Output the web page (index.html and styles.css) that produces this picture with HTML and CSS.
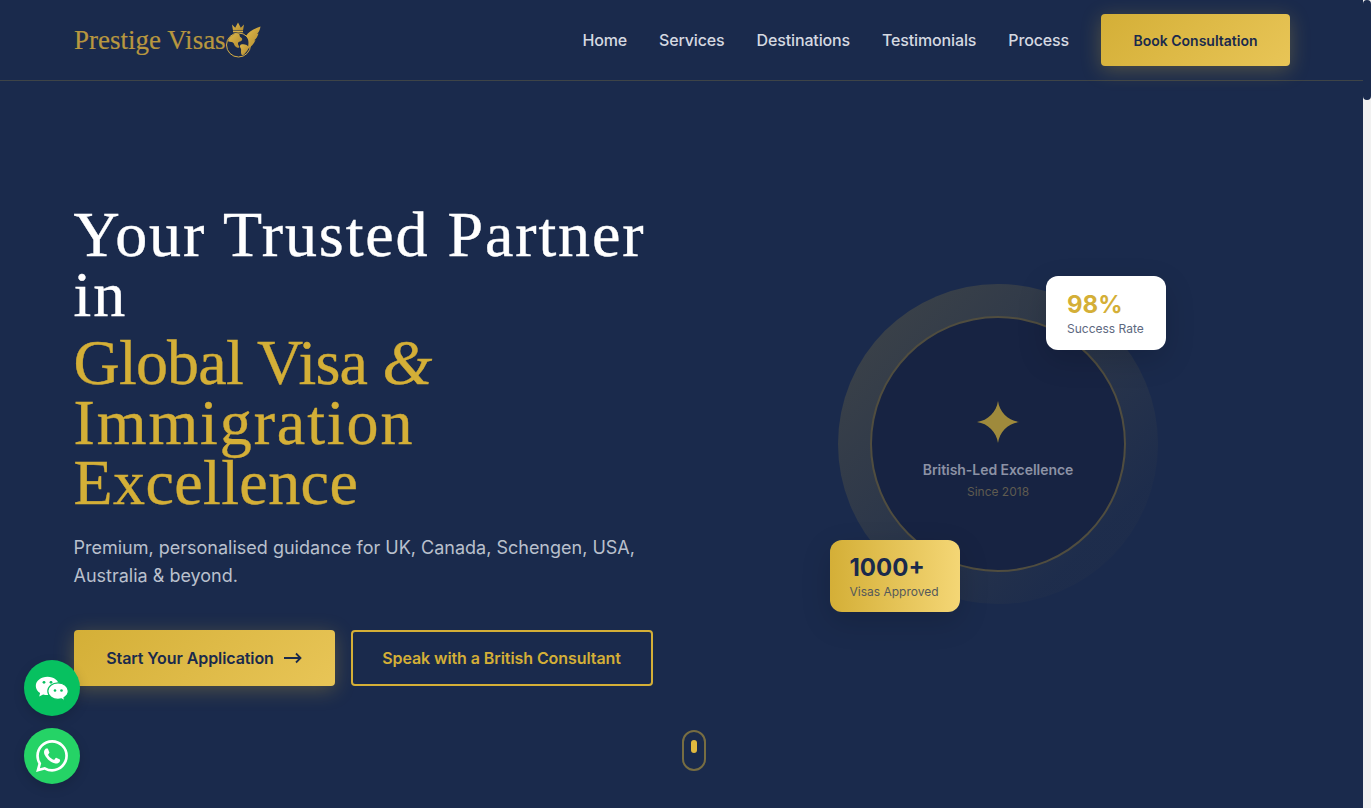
FILE: index.html
```html
<!DOCTYPE html>
<html lang="en">
<head>
    <meta charset="UTF-8">
    <meta name="viewport" content="width=device-width, initial-scale=1.0">
    <title>Prestige Visas</title>
    <link rel="stylesheet" href="styles.css">
</head>
<body>

<div class="page">
    <header class="site-header">
        <a class="logo" href="#">
            <span>Prestige Visas</span>
            <svg class="logo-mark" viewBox="0 0 44 44" aria-hidden="true">
                <defs>
                    <linearGradient id="logo-gold" x1="0" y1="0" x2="1" y2="1">
                        <stop offset="0" stop-color="#e0b94a"/>
                        <stop offset="1" stop-color="#b08a30"/>
                    </linearGradient>
                </defs>
                <path fill="url(#logo-gold)" d="M11 6.500l3.200 3.200L17 4.500l2.800 5.200L23 6.500l-1 6H12z"/>
                <rect x="12" y="13" width="10" height="1.300" fill="#d6ae45"/>
                <circle cx="17.500" cy="27" r="12" fill="none" stroke="#d6ae45" stroke-width="1"/>
                <path fill="url(#logo-gold)" d="M7 23c1.500-4.500 6-8 10.500-7.500 2 1.500.5 3 2.500 4s1.500 3.500-1 4-2.500 2.500-1 4.500-1.500 2.500-3.500.5-1-4-4-4.500-3.500-.5-3.500-1z"/>
                <path fill="url(#logo-gold)" d="M20 26.500c3-1 7 .5 7.500 2.500s-2.500 5.500-4.500 7.500-3-.5-3-2.500.5-2.500-.5-4-.5-3 .5-3.500z"/>
                <path fill="url(#logo-gold)" d="M25 18C28 13 33 11 39.500 8.500 39 12 38 14 36 16l1.500-.5C36.500 19 35 21 33 22.500l1.500-.5C33 26 30 29 26.500 31 28 26 28 21 25 18z"/>
            </svg>
        </a>
        <nav class="main-nav">
            <a href="#">Home</a>
            <a href="#">Services</a>
            <a href="#">Destinations</a>
            <a href="#">Testimonials</a>
            <a href="#">Process</a>
            <a class="btn btn-gold btn-small" href="#">Book Consultation</a>
        </nav>
    </header>

    <section class="hero">
        <div class="hero-text">
            <h1>
                <span class="line-white">Your Trusted Partner in</span>
                <span class="line-gold line-global">Global Visa <i>&amp;</i></span>
                <span class="line-gold line-immigration">Immigration</span>
                <span class="line-gold line-excellence">Excellence</span>
            </h1>
            <p>Premium, personalised guidance for UK, Canada, Schengen, USA, Australia &amp; beyond.</p>
            <div class="hero-actions">
                <a class="btn btn-gold" href="#">
                    Start Your Application
                    <svg class="arrow" viewBox="0 0 18 12" aria-hidden="true"><path d="M0 6h16.500M12 1.500L16.500 6 12 10.500"/></svg>
                </a>
                <a class="btn btn-outline" href="#">Speak with a British Consultant</a>
            </div>
        </div>

        <div class="hero-visual">
            <div class="ring">
                <div class="ring-inner">
                    <svg class="sparkle" viewBox="0 0 42 42" aria-hidden="true"><path d="M21 0C22.500 11 31 19.500 42 21 31 22.500 22.500 31 21 42 19.500 31 11 22.500 0 21 11 19.500 19.500 11 21 0z"/></svg>
                    <strong>British-Led Excellence</strong>
                    <span>Since 2018</span>
                </div>
                <div class="badge badge-white">
                    <b>98%</b>
                    <span>Success Rate</span>
                </div>
                <div class="badge badge-gold">
                    <b>1000+</b>
                    <span>Visas Approved</span>
                </div>
            </div>
        </div>

        <div class="scroll-hint"><span></span></div>
    </section>

    <div class="float-buttons">
        <a class="float-btn wechat" href="#" aria-label="WeChat">
            <svg viewBox="0 0 56 56" aria-hidden="true">
                <path fill="#fff" d="M23.500 16.800c-6.500 0-11.700 4.100-11.700 9.200 0 2.900 1.700 5.400 4.300 7.100l-.9 3.400 3.900-2.100c1.400.4 2.900.7 4.400.7 6.500 0 11.700-4.100 11.700-9.100s-5.200-9.200-11.700-9.200z"/>
                <path fill="#fff" stroke="#07c160" stroke-width="1.200" d="M34 22.800c-5.600 0-10.200 3.700-10.200 8.300s4.600 8.300 10.200 8.300c1.200 0 2.400-.2 3.500-.5l3.300 2-.8-3.200c2.600-1.500 4.300-3.900 4.300-6.600 0-4.600-4.600-8.300-10.300-8.300z"/>
                <circle fill="#07c160" cx="20" cy="22.300" r="1.400"/>
                <circle fill="#07c160" cx="27" cy="22.300" r="1.400"/>
                <circle fill="#07c160" cx="31" cy="30.500" r="1.300"/>
                <circle fill="#07c160" cx="37.500" cy="30.500" r="1.300"/>
            </svg>
        </a>
        <a class="float-btn whatsapp" href="#" aria-label="WhatsApp">
            <svg class="wa-icon" viewBox="0 0 24 24" aria-hidden="true">
                <path fill="#fff" d="M17.472 14.382c-.297-.149-1.758-.867-2.03-.967-.273-.099-.471-.148-.67.15-.197.297-.767.966-.94 1.164-.173.199-.347.223-.644.075-.297-.15-1.255-.463-2.39-1.475-.883-.788-1.48-1.761-1.653-2.059-.173-.297-.018-.458.13-.606.134-.133.298-.347.446-.52.149-.174.198-.298.298-.497.099-.198.05-.371-.025-.52-.075-.149-.669-1.612-.916-2.207-.242-.579-.487-.5-.669-.51-.173-.008-.371-.01-.57-.01-.198 0-.52.074-.792.372-.272.297-1.04 1.016-1.04 2.479 0 1.462 1.065 2.875 1.213 3.074.149.198 2.096 3.2 5.077 4.487.709.306 1.262.489 1.694.625.712.227 1.36.195 1.871.118.571-.085 1.758-.719 2.006-1.413.248-.694.248-1.289.173-1.413-.074-.124-.272-.198-.57-.347m-5.421 7.403h-.004a9.87 9.87 0 01-5.031-1.378l-.361-.214-3.741.982.998-3.648-.235-.374a9.86 9.86 0 01-1.51-5.26c.001-5.45 4.436-9.884 9.888-9.884 2.64 0 5.122 1.03 6.988 2.898a9.825 9.825 0 012.893 6.994c-.003 5.45-4.437 9.884-9.885 9.884m8.413-18.297A11.815 11.815 0 0012.05 0C5.495 0 .16 5.335.157 11.892c0 2.096.547 4.142 1.588 5.945L.057 24l6.305-1.654a11.882 11.882 0 005.683 1.448h.005c6.554 0 11.89-5.335 11.893-11.893a11.821 11.821 0 00-3.48-8.413z"/>
            </svg>
        </a>
    </div>
</div>

<div class="scroll-rail"><div class="scroll-thumb"></div></div>

</body>
</html>
```
FILE: styles.css
```css
* {
    box-sizing: border-box;
}
html, body {
    height: 100%;
}
body {
    margin: 0;
    display: flex;
    overflow: hidden;
    background-color: #f1f1f1;
    font-family: Inter, "Liberation Sans", sans-serif;
    color: #ffffff;
}
a {
    text-decoration: none;
    color: inherit;
}
.page {
    flex: 1;
    min-width: 0;
    background-color: #1a2a4c;
}

/* header */
.site-header {
    height: 81px;
    padding: 0 73px 0 74px;
    display: flex;
    align-items: center;
    justify-content: space-between;
    border-bottom: 1px solid rgba(212, 175, 55, 0.2);
}
.logo {
    display: flex;
    align-items: center;
    font-family: "Liberation Serif", serif;
    font-size: 27px;
    color: #b8973f;
    -webkit-text-stroke: 0.2px #b8973f;
}
.logo-mark {
    width: 44px;
    height: 44px;
    margin-left: -5px;
    margin-right: -4px;
}
.main-nav {
    display: flex;
    align-items: center;
    gap: 32px;
    font-size: 16px;
    font-weight: 500;
    letter-spacing: -0.14px;
    color: #d5d9e1;
}

/* buttons */
.btn {
    display: inline-flex;
    align-items: center;
    justify-content: center;
    height: 56px;
    border-radius: 4px;
    font-size: 16px;
    font-weight: 600;
    letter-spacing: -0.08px;
    white-space: nowrap;
}
.btn-gold {
    width: 261px;
    gap: 10px;
    color: #1a2a4c;
    background: linear-gradient(135deg, #d4af37, #e8c557);
    box-shadow: 0 4px 20px rgba(212, 175, 55, 0.3);
}
.main-nav .btn-small {
    height: 52px;
    width: 189px;
    font-size: 14px;
    letter-spacing: 0;
    color: #1a2a4c;
}
.btn-outline {
    width: 302px;
    color: #d4af37;
    border: 2px solid #d4af37;
}
.arrow {
    width: 18px;
    height: 12px;
    fill: none;
    stroke: #1a2a4c;
    stroke-width: 1.8;
}

/* hero */
.hero {
    position: relative;
    height: 727px;
    padding: 124px 73px 0 73.5px;
    display: grid;
    grid-template-columns: 580px 1fr;
    column-gap: 52.5px;
    align-items: start;
}
h1 {
    margin: 0;
    font-family: "Liberation Serif", serif;
    font-size: 64px;
    font-weight: 400;
    line-height: 60px;
    -webkit-text-stroke: 0.4px currentColor;
}
h1 span {
    display: block;
}
.line-white {
    letter-spacing: 1.9px;
}
.line-gold {
    color: #d4af37;
}
.line-global {
    margin-top: 8px;
    letter-spacing: -0.8px;
}
.line-immigration {
    letter-spacing: 1.9px;
}
.line-excellence {
    letter-spacing: 0.4px;
}
.hero-text p {
    margin: 21px 0 40px;
    font-size: 18px;
    line-height: 28px;
    color: #b9c0cd;
}
.hero-actions {
    display: flex;
    gap: 16px;
}
.hero-visual {
    display: flex;
    justify-content: center;
    padding-top: 79px;
}

/* circle on the right */
.ring {
    position: relative;
    width: 320px;
    height: 320px;
    padding: 32px;
    border-radius: 50%;
    background: linear-gradient(135deg, rgba(212, 175, 55, 0.2), rgba(212, 175, 55, 0.02) 80%);
}
.ring-inner {
    height: 100%;
    border-radius: 50%;
    border: 2px solid rgba(212, 175, 55, 0.3);
    background-color: #172342;
    display: flex;
    flex-direction: column;
    align-items: center;
    padding-top: 83px;
    text-align: center;
}
.sparkle {
    width: 42px;
    height: 42px;
    fill: #9f8a3c;
    margin-bottom: 17px;
}
.ring-inner strong {
    font-size: 14px;
    line-height: 20px;
    font-weight: 600;
    letter-spacing: -0.05px;
    color: #8c92a5;
}
.ring-inner span {
    margin-top: 4px;
    font-size: 12px;
    line-height: 16px;
    color: #5f5b50;
}
.badge {
    position: absolute;
    display: flex;
    flex-direction: column;
    padding: 16px 20px;
    border-radius: 12px;
    box-shadow: 0 10px 30px rgba(0, 0, 0, 0.15);
}
.badge b {
    font-size: 24px;
    line-height: 26px;
    font-weight: 700;
}
.badge span {
    margin-top: 3px;
    font-size: 12px;
    line-height: 16px;
}
.badge-white {
    top: -8px;
    right: -8px;
    width: 120px;
    height: 74px;
    padding-left: 21px;
    background-color: #ffffff;
}
.badge-white b {
    color: #d4af37;
}
.badge-white span {
    color: #5d6880;
}
.badge-gold {
    bottom: -8px;
    left: -8px;
    width: 130px;
    height: 72px;
    padding-top: 15px;
    padding-left: 19.5px;
    background: linear-gradient(90deg, #d4af37, #f4d675);
}
.badge-gold b {
    color: #1a2a4c;
}
.badge-gold span {
    color: #55595a;
}

/* mouse icon under the hero */
.scroll-hint {
    position: absolute;
    left: 682px;
    top: 649px;
    width: 24px;
    height: 41px;
    border: 2px solid rgba(212, 175, 55, 0.5);
    border-radius: 12px;
    display: flex;
    justify-content: center;
    padding-top: 8px;
}
.scroll-hint span {
    width: 6px;
    height: 13px;
    border-radius: 3px;
    background-color: #e0b93f;
}

/* floating contact buttons */
.float-buttons {
    position: fixed;
    left: 24px;
    bottom: 24px;
    display: flex;
    flex-direction: column;
    gap: 12px;
}
.float-btn {
    width: 56px;
    height: 56px;
    border-radius: 50%;
    display: flex;
    align-items: center;
    justify-content: center;
    box-shadow: 0 4px 12px rgba(0, 0, 0, 0.15);
}
.float-btn svg {
    width: 56px;
    height: 56px;
}
.float-btn .wa-icon {
    width: 32px;
    height: 32px;
}
.wechat {
    background-color: #07c160;
}
.whatsapp {
    background-color: #25d366;
}

/* page scrollbar */
.scroll-rail {
    width: 8px;
    flex-shrink: 0;
}
.scroll-thumb {
    height: 100px;
    border-radius: 4px;
    background-color: #1a2a4c;
}
```
